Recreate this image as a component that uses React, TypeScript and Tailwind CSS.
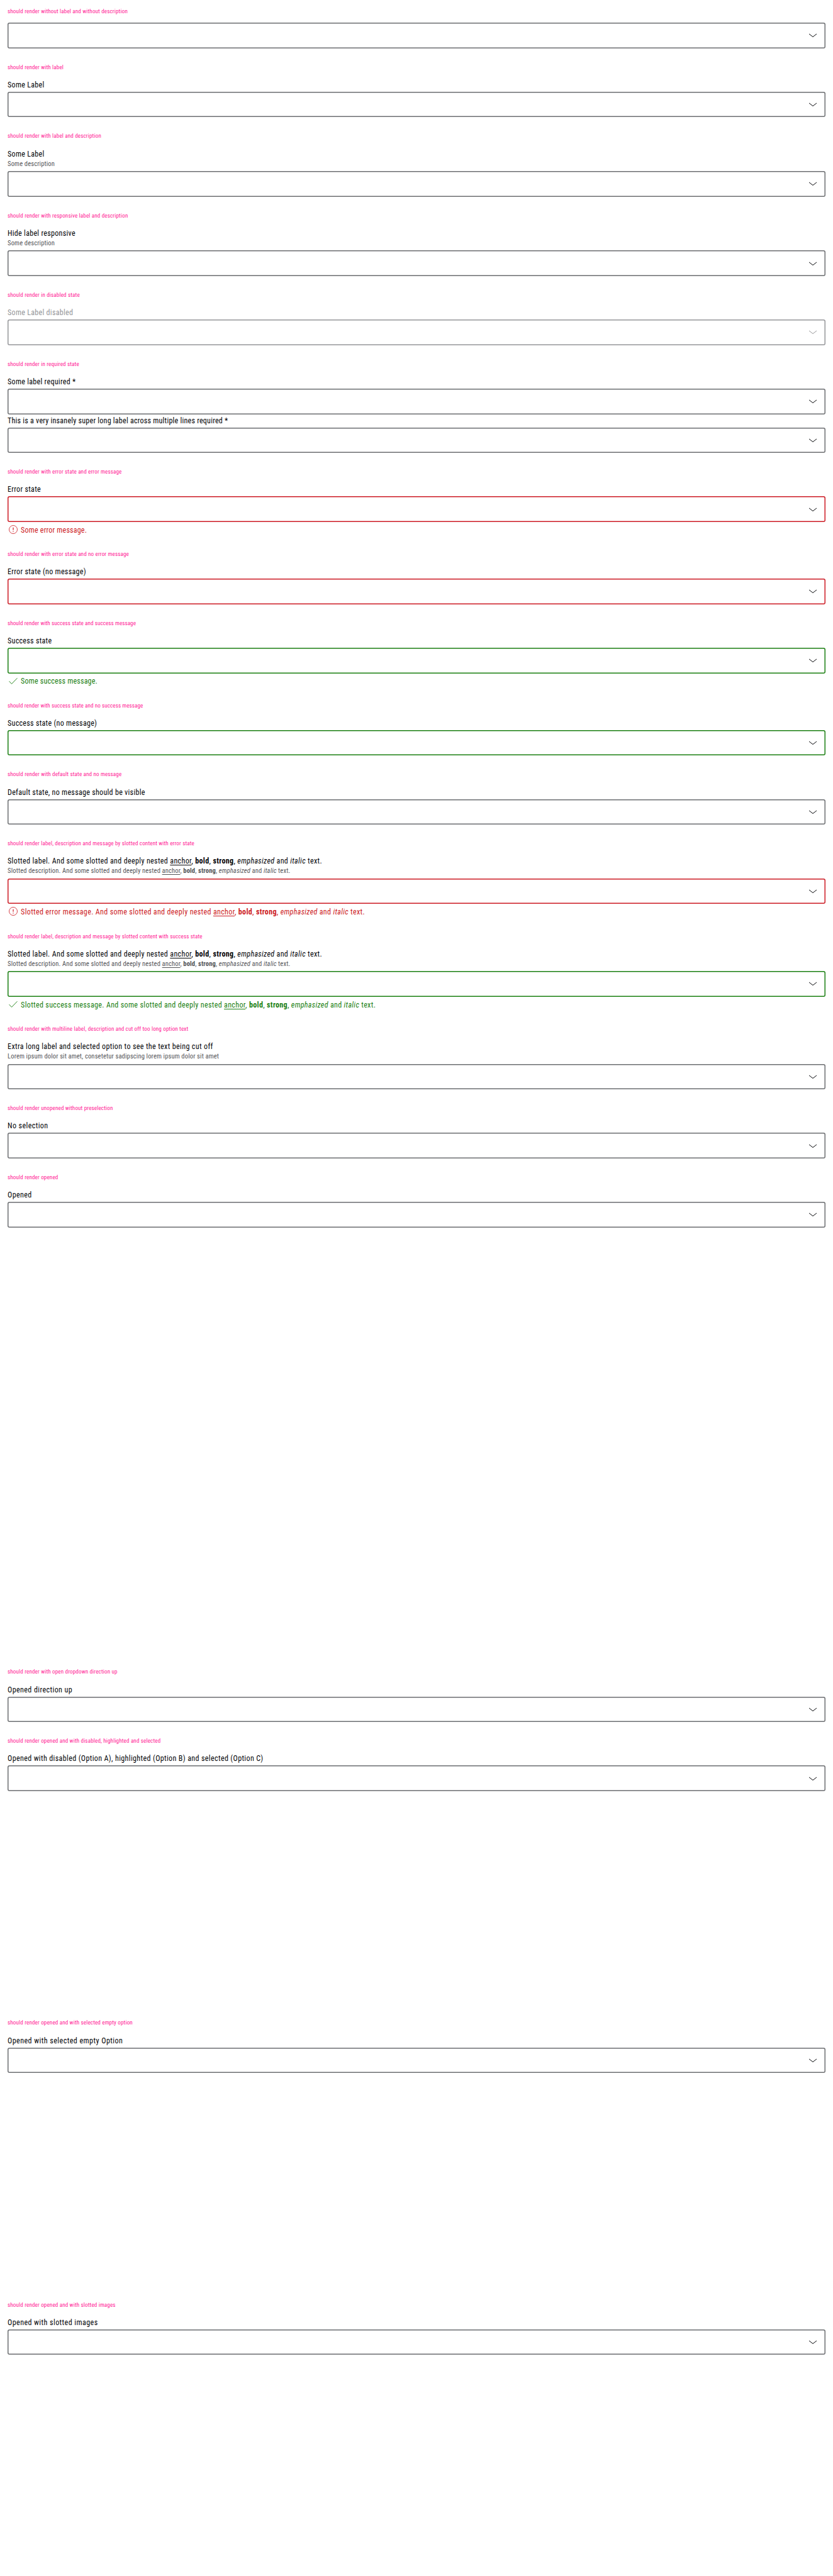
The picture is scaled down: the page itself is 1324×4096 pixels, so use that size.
import type { ReactNode } from 'react';

type State = 'none' | 'error' | 'success' | 'disabled';

type Field = {
  label?: ReactNode;
  labelTracking?: string;
  description?: ReactNode;
  message?: ReactNode;
  messageTracking?: string;
  state?: State;
};

type Story = {
  title: string;
  titleTracking?: string;
  fields: Field[];
  room?: string;
};

const OUTLINE: Record<State, string> = {
  none: 'shadow-[inset_0_0_0_1.5px_#6b6d70]',
  error: 'shadow-[inset_0_0_0_1.5px_#cc1922]',
  success: 'shadow-[inset_0_0_0_1.5px_#197e10]',
  disabled: 'shadow-[inset_0_0_0_1.5px_#949598]',
};

function Slotted({ name }: { name: string }) {
  return (
    <>
      {name}. And some slotted and deeply nested <a className="underline underline-offset-2">anchor</a>,{' '}
      <b className="font-bold">bold</b>, <strong className="font-bold">strong</strong>,{' '}
      <em className="italic">emphasized</em> and <i className="italic">italic</i> text.
    </>
  );
}

const STORIES: Story[] = [
  { title: 'should render without label and without description', fields: [{}] },
  { title: 'should render with label', fields: [{ label: 'Some Label' }] },
  {
    title: 'should render with label and description',
    fields: [{ label: 'Some Label', description: 'Some description' }],
  },
  {
    title: 'should render with responsive label and description',
    fields: [{ label: 'Hide label responsive', description: 'Some description' }],
  },
  { title: 'should render in disabled state', fields: [{ label: 'Some Label disabled', state: 'disabled' }] },
  {
    title: 'should render in required state',
    fields: [
      { label: 'Some label required *' },
      {
        label: 'This is a very insanely super long label across multiple lines required *',
        labelTracking: 'tracking-[0.0206em]',
      },
    ],
  },
  {
    title: 'should render with error state and error message',
    fields: [{ label: 'Error state', state: 'error', message: 'Some error message.' }],
  },
  {
    title: 'should render with error state and no error message',
    fields: [{ label: 'Error state (no message)', state: 'error' }],
  },
  {
    title: 'should render with success state and success message',
    titleTracking: 'tracking-[0.013em]',
    fields: [{ label: 'Success state', state: 'success', message: 'Some success message.' }],
  },
  {
    title: 'should render with success state and no success message',
    titleTracking: 'tracking-[0.013em]',
    fields: [{ label: 'Success state (no message)', state: 'success' }],
  },
  {
    title: 'should render with default state and no message',
    fields: [{ label: 'Default state, no message should be visible' }],
  },
  {
    title: 'should render label, description and message by slotted content with error state',
    fields: [
      {
        label: <Slotted name="Slotted label" />,
        labelTracking: 'tracking-[0.03em]',
        description: <Slotted name="Slotted description" />,
        state: 'error',
        message: <Slotted name="Slotted error message" />,
        messageTracking: 'tracking-[0.029em]',
      },
    ],
  },
  {
    title: 'should render label, description and message by slotted content with success state',
    fields: [
      {
        label: <Slotted name="Slotted label" />,
        labelTracking: 'tracking-[0.03em]',
        description: <Slotted name="Slotted description" />,
        state: 'success',
        message: <Slotted name="Slotted success message" />,
        messageTracking: 'tracking-[0.029em]',
      },
    ],
  },
  {
    title: 'should render with multiline label, description and cut off too long option text',
    fields: [
      {
        label: 'Extra long label and selected option to see the text being cut off',
        labelTracking: 'tracking-[0.031em]',
        description: 'Lorem ipsum dolor sit amet, consetetur sadipscing lorem ipsum dolor sit amet',
      },
    ],
  },
  {
    title: 'should render unopened without preselection',
    fields: [{ label: 'No selection', labelTracking: 'tracking-[0.035em]' }],
  },
  {
    title: 'should render opened',
    fields: [{ label: 'Opened', labelTracking: 'tracking-[0.035em]' }],
    room: 'pb-225',
  },
  {
    title: 'should render with open dropdown direction up',
    fields: [{ label: 'Opened direction up', labelTracking: 'tracking-[0.035em]' }],
  },
  {
    title: 'should render opened and with disabled, highlighted and selected',
    fields: [
      {
        label: 'Opened with disabled (Option A), highlighted (Option B) and selected (Option C)',
        labelTracking: 'tracking-[0.0317em]',
      },
    ],
    room: 'pb-112.5',
  },
  {
    title: 'should render opened and with selected empty option',
    fields: [{ label: 'Opened with selected empty Option', labelTracking: 'tracking-[0.039em]' }],
    room: 'pb-112.5',
  },
  {
    title: 'should render opened and with slotted images',
    fields: [{ label: 'Opened with slotted images', labelTracking: 'tracking-[0.037em]' }],
  },
];

function ChevronDown() {
  return (
    <svg viewBox="0 0 24 24" className="size-6" fill="none" stroke="currentColor" strokeWidth="1.3">
      <path d="M4 9.2 12 15.4 20 9.2" />
    </svg>
  );
}

function ErrorIcon() {
  return (
    <svg viewBox="0 0 24 24" className="size-6 shrink-0" fill="none" stroke="currentColor">
      <circle cx="12" cy="12" r="8.6" strokeWidth="1.1" />
      <path d="M12 7.5v5.5M12 14.8v1.7" strokeWidth="1.6" />
    </svg>
  );
}

function CheckIcon() {
  return (
    <svg viewBox="0 0 24 24" className="size-6 shrink-0" fill="none" stroke="currentColor" strokeWidth="1.2">
      <path d="M3.4 12.2 8.7 17.8 20.5 5.6" />
    </svg>
  );
}

function SelectField({
  label,
  labelTracking = 'tracking-[0.025em]',
  description,
  message,
  messageTracking = 'tracking-[0.017em]',
  state = 'none',
}: Field) {
  return (
    <div className="flex flex-col">
      {label && (
        <div className="flex flex-col pb-1">
          <span
            className={`h-6 text-[length:calc(var(--spacing)*4)] leading-7 ${labelTracking} ${
              state === 'disabled' ? 'text-[#949598]' : 'text-[#010205]'
            }`}
          >
            {label}
          </span>
          {description && (
            <span className="h-5.5 text-[length:calc(var(--spacing)*3.5)] leading-5.5 tracking-[0.015em] text-[#535457]">
              {description}
            </span>
          )}
        </div>
      )}
      <div className={`flex h-13.5 items-center justify-end rounded-[3px] pr-3.75 ${OUTLINE[state]}`}>
        <span className={state === 'disabled' ? 'text-[#949598]' : 'text-[#010205]'}>
          <ChevronDown />
        </span>
      </div>
      {message && (
        <div
          className={`flex h-7 items-center gap-1 pt-1 text-[length:calc(var(--spacing)*4)] leading-6 ${messageTracking} ${
            state === 'error' ? 'text-[#cc1922]' : 'text-[#197e10]'
          }`}
        >
          {state === 'error' ? <ErrorIcon /> : <CheckIcon />}
          <span className="pt-0.5">{message}</span>
        </div>
      )}
    </div>
  );
}

export default function App() {
  return (
    <main className="flex h-[4096px] w-[1324px] flex-col gap-4 overflow-hidden bg-white px-4 font-[Roboto,sans-serif] whitespace-nowrap [--spacing:3.008px] [font-stretch:87.5%]">
      {STORIES.map(({ title, titleTracking = 'tracking-[0.019em]', fields, room }) => (
        <section key={title} className={`flex flex-col ${room ?? ''}`}>
          <h2 className={`h-12 text-[length:calc(var(--spacing)*3)] leading-12.5 text-[#ff1493] ${titleTracking}`}>
            {title}
          </h2>
          {fields.map((field, i) => (
            <SelectField key={i} {...field} />
          ))}
        </section>
      ))}
    </main>
  );
}
